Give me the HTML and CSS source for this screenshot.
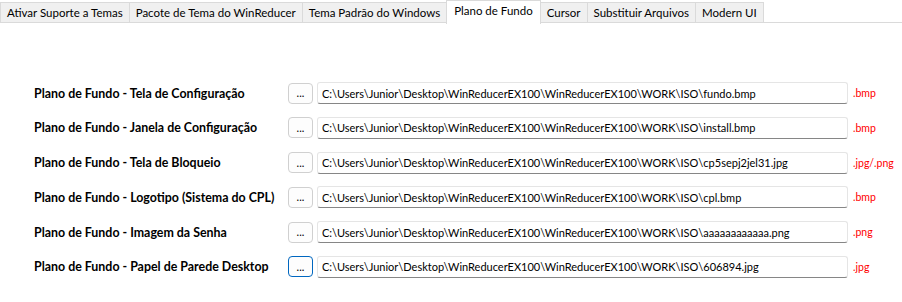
FILE: index.html
```html
<!DOCTYPE html>
<html lang="pt-BR">
<head>
  <meta charset="UTF-8" />
  <title>Plano de Fundo</title>
  <link rel="stylesheet" href="styles.css">
</head>
<body>

  <div class="tabs">
    <div class="tab">Ativar Suporte a Temas</div>
    <div class="tab">Pacote de Tema do WinReducer</div>
    <div class="tab">Tema Padrão do Windows</div>
    <div class="tab active">Plano de Fundo</div>
    <div class="tab">Cursor</div>
    <div class="tab">Substituir Arquivos</div>
    <div class="tab">Modern UI</div>
  </div>

  <div class="panel">
    <label class="lbl">Plano de Fundo - Tela de Configuração</label>
    <button class="browse">...</button>
    <input class="path" type="text" value="C:\Users\Junior\Desktop\WinReducerEX100\WinReducerEX100\WORK\ISO\fundo.bmp" />
    <span class="ext">.bmp</span>

    <label class="lbl">Plano de Fundo - Janela de Configuração</label>
    <button class="browse">...</button>
    <input class="path" type="text" value="C:\Users\Junior\Desktop\WinReducerEX100\WinReducerEX100\WORK\ISO\install.bmp" />
    <span class="ext">.bmp</span>

    <label class="lbl">Plano de Fundo - Tela de Bloqueio</label>
    <button class="browse">...</button>
    <input class="path" type="text" value="C:\Users\Junior\Desktop\WinReducerEX100\WinReducerEX100\WORK\ISO\cp5sepj2jel31.jpg" />
    <span class="ext">.jpg/.png</span>

    <label class="lbl">Plano de Fundo - Logotipo (Sistema do CPL)</label>
    <button class="browse">...</button>
    <input class="path" type="text" value="C:\Users\Junior\Desktop\WinReducerEX100\WinReducerEX100\WORK\ISO\cpl.bmp" />
    <span class="ext">.bmp</span>

    <label class="lbl">Plano de Fundo - Imagem da Senha</label>
    <button class="browse">...</button>
    <input class="path" type="text" value="C:\Users\Junior\Desktop\WinReducerEX100\WinReducerEX100\WORK\ISO\aaaaaaaaaaaa.png" />
    <span class="ext">.png</span>

    <label class="lbl">Plano de Fundo - Papel de Parede Desktop</label>
    <button class="browse focus">...</button>
    <input class="path" type="text" value="C:\Users\Junior\Desktop\WinReducerEX100\WinReducerEX100\WORK\ISO\606894.jpg" />
    <span class="ext">.jpg</span>
  </div>

</body>
</html>
```

FILE: styles.css
```css
body{
  margin:0;
  background:#fff;
  font-family:Lato,"Noto Sans",Arial,sans-serif;
  font-size:12px;
  color:#000
}
.tabs{
  display:flex;
  padding-top:2px;
  border-bottom:1px solid #dadada;
  height:20px;
  font-size:11.5px
}
.tab{
  height:19px;
  line-height:19px;
  padding:0 6px;
  background:#f0f0f0;
  border:1px solid #dadada;
  border-bottom:none;
  margin-right:-1px;
  white-space:nowrap
}
.tab.active{
  background:#fff;
  margin-top:-2px;
  height:23px;
  line-height:20px;
  padding:0 7px;
  position:relative;
  z-index:1
}
.panel{
  display:grid;
  grid-template-columns:250px 25px 531px auto;
  column-gap:4px;
  row-gap:12.8px;
  align-items:center;
  padding:59px 0 0 34px
}
.lbl{
  font-weight:bold;
  font-size:12.4px;
  white-space:nowrap
}
.browse{
  width:25px;
  height:21px;
  padding:0;
  font:inherit;
  font-size:11px;
  line-height:14px;
  background:#fdfdfd;
  border:1px solid #d0d0d0;
  border-radius:4px;
  color:#000
}
.browse.focus{border:1px solid #0067c0}
.path{
  box-sizing:border-box;
  width:531px;
  height:22px;
  padding:0 4px;
  font:inherit;
  font-size:11px;
  background:#fff;
  border:1px solid #e5e5e5;
  border-bottom:1px solid #868686;
  border-radius:3px;
  outline:none
}
.ext{
  margin-left:1px;
  color:#f00;
  font-size:10.5px
}
```
